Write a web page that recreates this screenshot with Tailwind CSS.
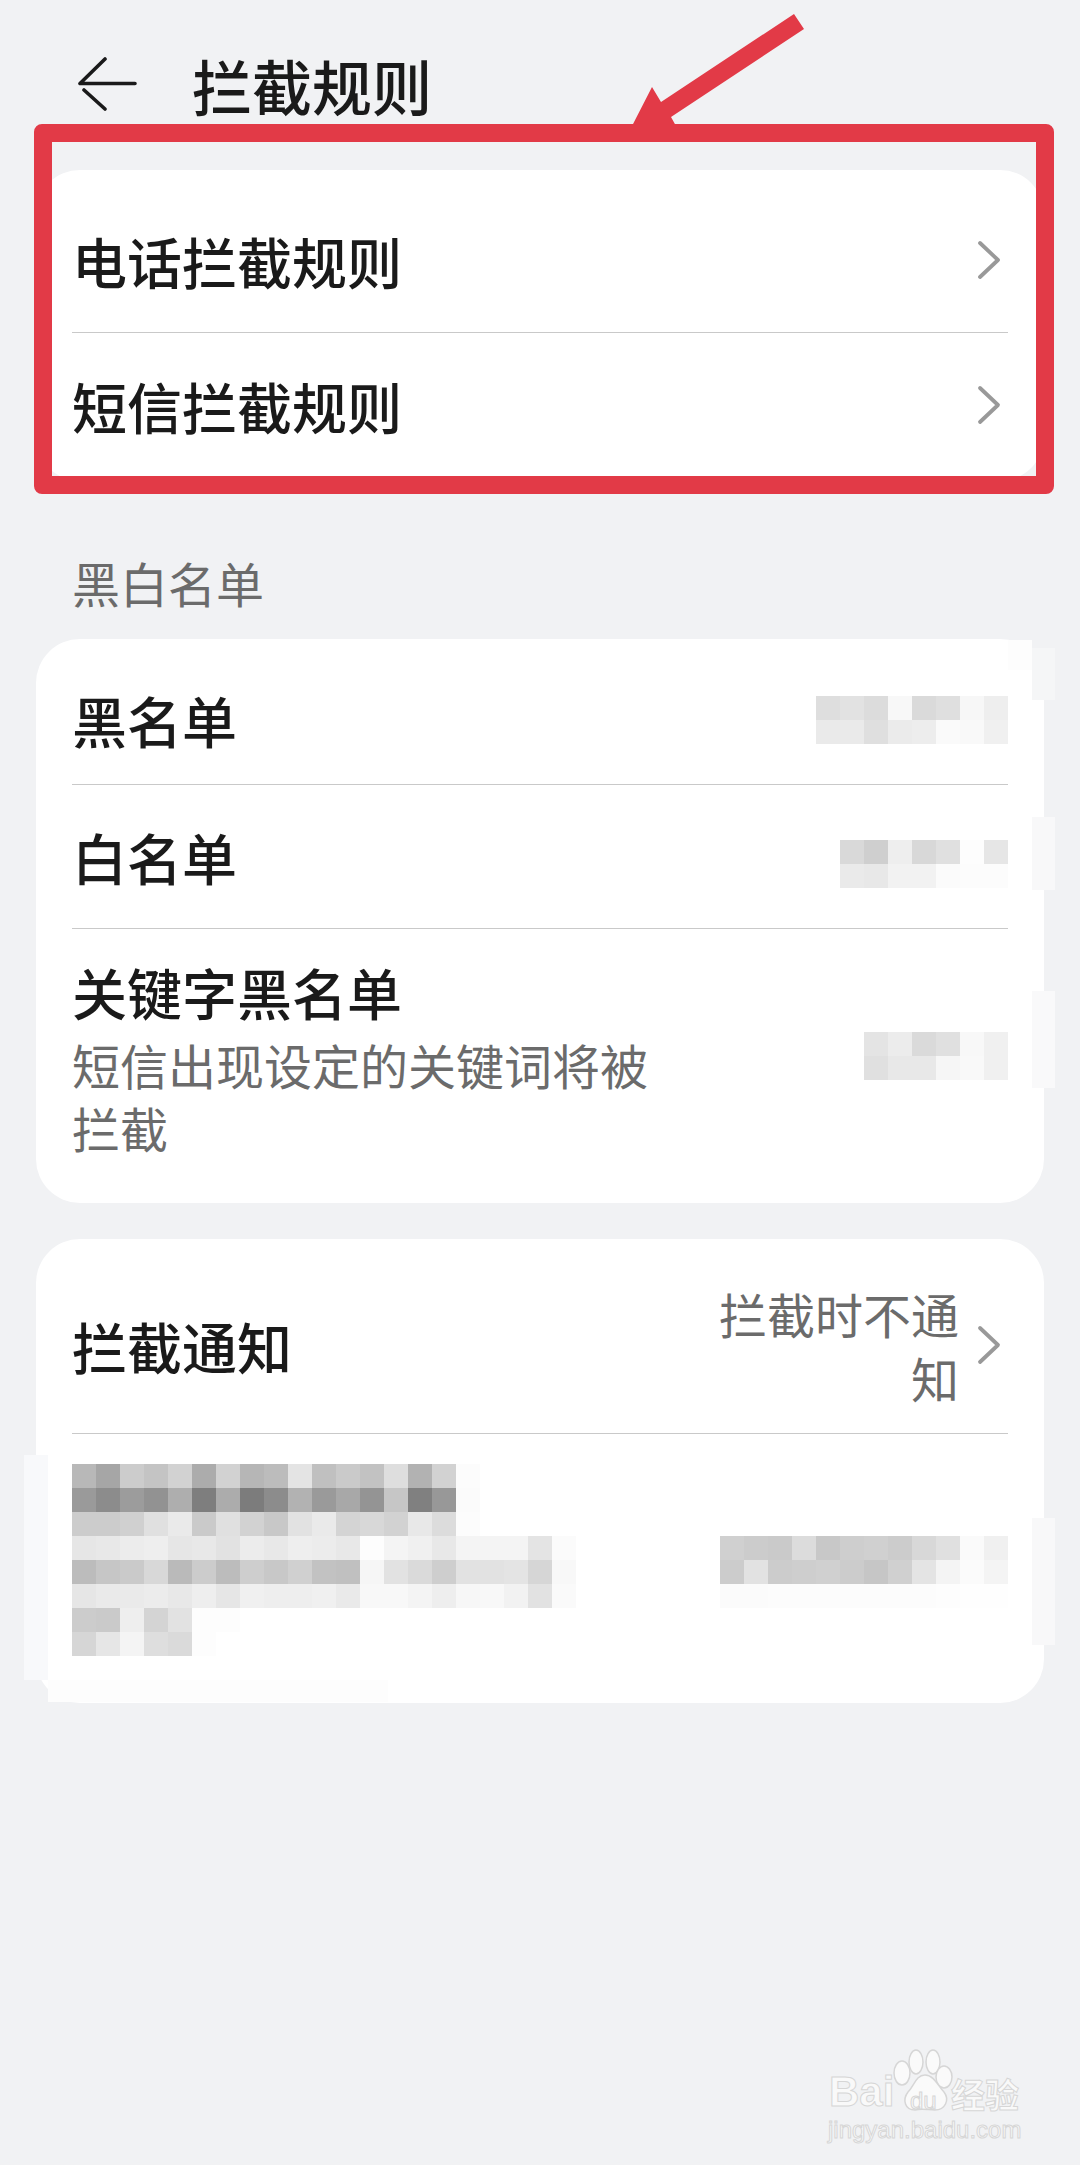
<!DOCTYPE html>
<html lang="zh-CN">
<head>
    <meta charset="UTF-8">
    <meta name="viewport" content="width=device-width, initial-scale=1.0">
    <title>拦截规则</title>
    <script src="https://cdn.jsdelivr.net/npm/@tailwindcss/browser@4"></script>
</head>
<body>
    <div class="relative w-[1080px] h-[2165px] overflow-hidden bg-[#f1f2f4] text-[#1a1a1a] font-['Noto_Sans_CJK_SC','Noto_Sans',sans-serif]">
        <!-- Header -->
        <header class="flex items-center h-[170px] pl-[78px]">
            <svg class="w-[60px] h-[54px] mb-[2px] shrink-0" viewBox="78 59 60 54" fill="none" stroke="#1a1a1a" stroke-width="3.6" stroke-linecap="round" stroke-linejoin="round">
                <path d="M105 61 L80 85.5 H135"/>
                <path d="M84 92 L105 111"/>
            </svg>
            <h1 class="ml-[54px] text-[60px] leading-[74px] font-medium">拦截规则</h1>
        </header>

        <!-- Rule links -->
        <section class="mx-[36px] h-[311px] rounded-[44px] bg-white">
            <div class="flex items-center justify-between h-[162px] pt-[18px] pl-[36px] pr-[43px]">
                <span class="text-[55px] leading-[70px] font-medium">电话拦截规则</span>
                <svg class="w-[24px] h-[40px]" viewBox="0 0 24 40" fill="none" stroke="#999999" stroke-width="3.8" stroke-linecap="round" stroke-linejoin="round"><path d="M3 3 L21 20 L3 37"/></svg>
            </div>
            <div class="mx-[36px] h-px bg-[#c9c9c9]"></div>
            <div class="flex items-center justify-between h-[148px] pb-[4px] pl-[36px] pr-[43px]">
                <span class="text-[55px] leading-[70px] font-medium">短信拦截规则</span>
                <svg class="w-[24px] h-[40px]" viewBox="0 0 24 40" fill="none" stroke="#999999" stroke-width="3.8" stroke-linecap="round" stroke-linejoin="round"><path d="M3 3 L21 20 L3 37"/></svg>
            </div>
        </section>

        <!-- Black and white lists -->
        <h2 class="h-[158px] pt-[69px] pl-[72px] text-[48px] leading-[64px] text-[#6b6b6b]">黑白名单</h2>
        <section class="mx-[36px] h-[564px] rounded-[44px] bg-white">
            <div class="flex items-center justify-between h-[145px] pt-[15px] pl-[36px] pr-[36px]">
                <span class="text-[55px] leading-[70px] font-medium">黑名单</span>
                <div class="mt-[2px]" data-mosaic="de e2 dc f8 da df f7 ee|ea ea df eb ed fa f9 f0"></div>
            </div>
            <div class="mx-[36px] h-px bg-[#c9c9c9]"></div>
            <div class="flex items-center justify-between h-[143px] pb-[1px] pl-[36px] pr-[36px]">
                <span class="text-[55px] leading-[70px] font-medium">白名单</span>
                <div class="mt-[16px]" data-mosaic="d9 cf ee d8 e0 fd e6|ea e8 f2 f2 fb fc fc"></div>
            </div>
            <div class="mx-[36px] h-px bg-[#c9c9c9]"></div>
            <div class="flex items-start justify-between pt-[27px] pl-[36px] pr-[36px]">
                <div class="w-[590px]">
                    <div class="text-[55px] leading-[70px] font-medium">关键字黑名单</div>
                    <p class="mt-[7px] text-[48px] leading-[63px] text-[#6b6b6b]">短信出现设定的关键词将被拦截</p>
                </div>
                <div class="mt-[76px]" data-mosaic="e4 ec da e0 f8 f0|e0 e8 e8 f6 f9 f0"></div>
            </div>
        </section>

        <!-- Notification settings -->
        <section class="mx-[36px] mt-[36px] h-[464px] rounded-[44px] bg-white">
            <div class="flex items-center justify-between h-[194px] pt-[18px] pl-[36px] pr-[43px]">
                <span class="text-[55px] leading-[70px] font-medium">拦截通知</span>
                <div class="flex items-center mb-[1px]">
                    <p class="w-[244px] mr-[18px] text-right text-[48px] leading-[64px] text-[#6b6b6b]">拦截时不通知</p>
                    <svg class="w-[24px] h-[40px]" viewBox="0 0 24 40" fill="none" stroke="#999999" stroke-width="3.8" stroke-linecap="round" stroke-linejoin="round"><path d="M3 3 L21 20 L3 37"/></svg>
                </div>
            </div>
            <div class="mx-[36px] h-px bg-[#c9c9c9]"></div>
            <div class="flex items-start justify-between pt-[30px] pl-[36px] pr-[36px]">
                <div data-mosaic="b8 a6 cc c4 d2 ac d2 b6 bc e4 c0 ca c2 de b2 d2 fc|9a 8c 9c 92 ae 7e ac 7c 8c b2 9a a8 94 c6 80 98 fb|cc cc d0 e0 ea ca e0 d2 c8 e2 ea d4 d8 d2 e8 dc fc|e6 e8 ec ee e6 e8 e2 ec e8 ee ec e8 fd f4 f0 e8 f4 f4 f4 e4 fb|bc c6 ca d8 ba cc bc ce c8 d0 c2 c0 f6 e2 da ce e2 e2 e4 d6 f8|e6 ea ea ec e8 ee e6 f0 ee ee f0 ea f8 f8 f4 ee f7 f8 f2 e2 fa|cc ca ee d4 e2 fd fd|d6 e6 f4 de da fd"></div>
                <div class="mt-[72px]" data-mosaic="d0 cc ca dc c8 ce d0 cc d8 e0 fa f0|cc e2 cc ce d0 cc c6 d0 e4 f4 fb f4|fb fb fc fc fc fc fc fc fc fd fe fe"></div>
            </div>
        </section>

        <!-- Retouched patches around the blurred values -->
        <div class="absolute left-[24px] top-[1455px] w-[24px] h-[225px] bg-[#f8f9fb]"></div>
        <div class="absolute left-[48px] top-[1680px] w-[340px] h-[22px] bg-[#fdfdfd]"></div>
        <div class="absolute left-[1008px] top-[640px] w-[24px] h-[30px] bg-[#fdfdfd]"></div>
        <div class="absolute left-[1032px] top-[1518px] w-[23px] h-[127px] bg-[#f8f8f9]"></div>
        <div class="absolute left-[1032px] top-[817px] w-[23px] h-[73px] bg-[#f8f8f9]"></div>
        <div class="absolute left-[1032px] top-[991px] w-[23px] h-[97px] bg-[#f9f9fa]"></div>
        <div class="absolute left-[1032px] top-[648px] w-[23px] h-[52px] bg-[#f5f6f7]"></div>

        <!-- Red annotation -->
        <div class="absolute left-[34px] top-[124px] w-[1020px] h-[370px] border-[18px] border-[#e23a47] rounded-[8px]"></div>
        <svg class="absolute left-0 top-0 w-[1080px] h-[130px]" viewBox="0 0 1080 130">
            <polygon fill="#e23a47" points="794,14 804,29 671,117 676,126 632,126 652,87 661,102"/>
        </svg>

        <!-- Watermark -->
        <div class="absolute left-[826px] top-[2048px] w-[200px] h-[96px] text-[#f9f9f9] font-['Liberation_Sans',sans-serif]">
            <svg class="absolute left-0 top-0 w-[200px] h-[70px]" viewBox="826 2048 200 70" fill="#fafafa" stroke="#d6d6d6" stroke-width="1.5">
                <ellipse cx="902" cy="2073" rx="8" ry="12"/>
                <ellipse cx="916" cy="2062" rx="7" ry="12"/>
                <ellipse cx="933" cy="2062" rx="7" ry="12"/>
                <ellipse cx="944" cy="2077" rx="8" ry="11"/>
                <path d="M925 2075 C934 2075 938 2086 944 2092 C950 2100 945 2110 935 2110 C928 2110 922 2108 915 2110 C905 2110 902 2100 908 2092 C914 2086 916 2075 925 2075Z"/>
            </svg>
            <span class="absolute left-[3px] top-[20px] text-[42px] leading-[48px] font-bold [-webkit-text-stroke:1px_#d6d6d6]">Bai</span>
            <span class="absolute left-[84px] top-[40px] text-[24px] leading-[26px] text-[#fafafa] [-webkit-text-stroke:1px_#d6d6d6]">du</span>
            <span class="absolute left-[125px] top-[26px] text-[34px] leading-[40px] font-bold font-['Noto_Sans_CJK_SC',sans-serif] [-webkit-text-stroke:1px_#d6d6d6]">经验</span>
            <span class="absolute left-[2px] top-[67px] text-[24px] leading-[30px] [-webkit-text-stroke:1px_#d6d6d6]">jingyan.baidu.com</span>
        </div>
    </div>

    <script>
        // blurred values: each row of the data holds grey levels, one 24px cell each
        document.querySelectorAll('[data-mosaic]').forEach((box) => {
            box.dataset.mosaic.split('|').forEach((row) => {
                const line = document.createElement('div');
                line.className = 'flex';
                row.split(' ').forEach((grey) => {
                    const cell = document.createElement('div');
                    cell.className = 'w-[24px] h-[24px]';
                    cell.style.background = `#${grey}${grey}${grey}`;
                    line.appendChild(cell);
                });
                box.appendChild(line);
            });
        });
    </script>
</body>
</html>
